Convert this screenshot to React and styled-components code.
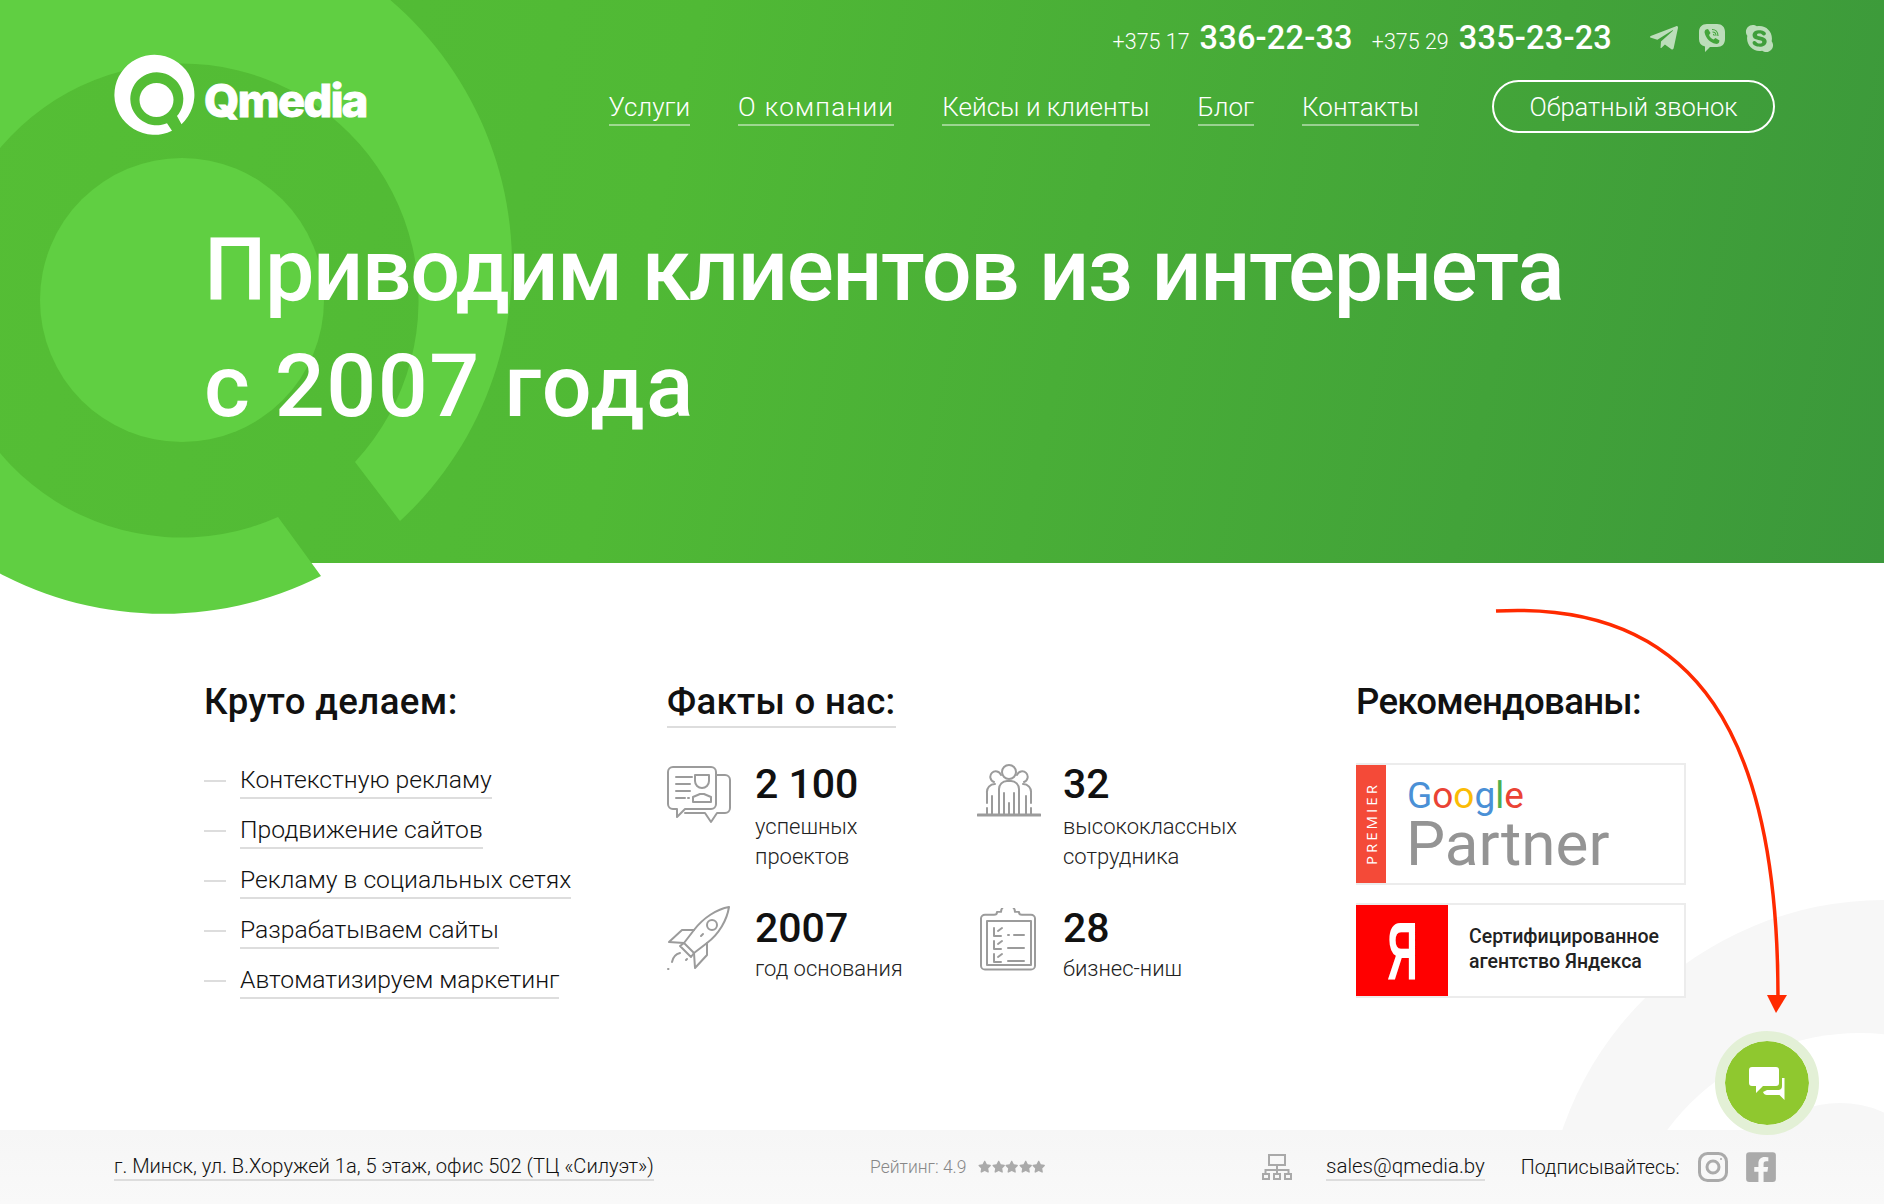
import React from "react";
import styled, { createGlobalStyle } from "styled-components";
import { FaTelegramPlane, FaSkype, FaFacebookSquare, FaStar } from "react-icons/fa";

const Global = createGlobalStyle`
  html, body {
    margin: 0;
    padding: 0;
    background: #fff;
  }
  body {
    font-family: Roboto, "Noto Sans", sans-serif;
    color: #111;
  }
  * {
    box-sizing: border-box;
  }
`;

const Page = styled.div`
  position: relative;
  width: 1884px;
  height: 1204px;
  overflow: hidden;
  background: #fff;
  display: flex;
  flex-direction: column;
`;

const Decor = styled.svg`
  position: absolute;
  left: 0;
  top: 0;
  z-index: 1;
`;

const Hero = styled.section`
  height: 563px;
  flex: none;
  background: linear-gradient(102deg, #55be35 0%, #50b935 35%, #3b983b 100%);
  color: #fff;
`;

const Header = styled.header`
  position: relative;
  z-index: 2;
  display: flex;
  justify-content: space-between;
  padding: 0 109px 0 114px;
`;

const Logo = styled.a`
  display: flex;
  align-items: center;
  gap: 9px;
  margin-top: 54px;
  height: 82px;
`;

const LogoText = styled.span`
  font-family: Inter, sans-serif;
  font-weight: 800;
  font-size: 45px;
  letter-spacing: -1.5px;
  color: #fff;
  margin-top: 10px;
  -webkit-text-stroke: 1px #fff;
`;

const HeaderRight = styled.div`
  display: flex;
  flex-direction: column;
  align-items: flex-end;
`;

const Contacts = styled.div`
  display: flex;
  align-items: center;
  height: 80px;
  padding-bottom: 4px;
`;

const Phone = styled.a`
  display: flex;
  align-items: baseline;
  gap: 10px;
  margin-right: 19px;
  font-size: 21.5px;
  font-weight: 300;
  color: #fff;
  white-space: nowrap;

  b {
    font-size: 32.5px;
    font-weight: 500;
    letter-spacing: 0.2px;
  }
`;

const Messengers = styled.div`
  display: flex;
  align-items: center;
  gap: 18px;
  margin-left: 17px;
  color: rgba(255, 255, 255, 0.65);

  svg {
    display: block;
  }
`;

const NavRow = styled.nav`
  display: flex;
  align-items: center;
  height: 53px;
`;

const NavLink = styled.a`
  font-size: 26px;
  font-weight: 300;
  line-height: 34px;
  color: #fff;
  border-bottom: 2px solid rgba(255, 255, 255, 0.45);
  margin-right: 48px;
  margin-top: 2px;
  white-space: nowrap;

  &:nth-child(2) {
    letter-spacing: 1.3px;
  }
`;

const CallButton = styled.a`
  display: flex;
  align-items: center;
  justify-content: center;
  width: 283px;
  height: 53px;
  margin-left: 25px;
  border: 2px solid #fff;
  border-radius: 27px;
  font-size: 25.5px;
  font-weight: 300;
  color: #fff;
`;

const Title = styled.h1`
  position: relative;
  z-index: 2;
  margin: 76px 0 0 204px;
  font-size: 88px;
  line-height: 116px;
  font-weight: 500;
  letter-spacing: -1.5px;
  color: #fff;
`;

const TitleLine = styled.span`
  letter-spacing: 1.5px;
`;

const Main = styled.main`
  position: relative;
  flex: 1;
  padding: 115px 0 0 204px;
  display: grid;
  grid-template-columns: 463px 689px 330px;
  align-items: start;
`;

const BackShape = styled.svg`
  position: absolute;
  left: 1500px;
  top: 300px;
`;

const Column = styled.div`
  position: relative;
`;

const Heading = styled.h2`
  display: inline-block;
  margin: 0;
  font-size: 36.6px;
  line-height: 48px;
  font-weight: 500;
  letter-spacing: ${(p) => p.$ls}px;
  color: #111;
  border-bottom: ${(p) => (p.$line ? "2px solid #ddd" : "2px solid transparent")};
`;

const List = styled.ul`
  list-style: none;
  margin: 35px 0 0;
  padding: 0;
  display: flex;
  flex-direction: column;
  gap: 14px;
`;

const ListItem = styled.li`
  display: flex;
  align-items: center;
  gap: 14px;
  height: 36px;

  &::before {
    content: "";
    width: 22px;
    height: 2px;
    background: #ddd;
  }
`;

const ListLink = styled.a`
  font-size: 24.7px;
  font-weight: 300;
  line-height: 34px;
  color: #111;
  border-bottom: 2px solid #ddd;
  white-space: nowrap;
`;

const Facts = styled.div`
  display: grid;
  grid-template-columns: 310px 300px;
  grid-template-rows: 144px auto;
  margin-top: 32px;
`;

const Fact = styled.div`
  display: flex;
  align-items: flex-start;
`;

const FactIcon = styled.svg`
  flex: none;
  width: 64px;
  height: 64px;
  margin-top: ${(p) => p.$top}px;
  margin-right: ${(p) => p.$gap}px;
  fill: none;
  stroke: #9b9b9b;
  stroke-width: 2;
  stroke-linecap: round;
  stroke-linejoin: round;
`;

const FactNumber = styled.div`
  font-size: 41px;
  line-height: 48px;
  font-weight: 500;
  color: #111;
`;

const FactLabel = styled.div`
  margin-top: ${(p) => (p.$tight ? 2 : 4)}px;
  font-size: 22px;
  line-height: 30px;
  font-weight: 300;
  color: #222;
`;

const Badge = styled.div`
  display: flex;
  width: 330px;
  height: ${(p) => p.$h}px;
  margin-top: ${(p) => p.$top}px;
  background: #fff;
  border: 2px solid #ececec;
  border-left: 0;
`;

const PremierStripe = styled.div`
  width: 30px;
  background: #f44a38;
  color: #fff;
  font-family: "Open Sans", sans-serif;
  font-size: 15px;
  letter-spacing: 3px;
  display: flex;
  align-items: center;
  justify-content: center;
  writing-mode: vertical-rl;
  transform: rotate(180deg);
`;

const GoogleBlock = styled.div`
  padding: 8px 0 0 21px;
  display: flex;
  flex-direction: column;
`;

const GoogleWord = styled.div`
  font-size: 37px;
  line-height: 46px;
`;

const GoogleLetter = styled.span`
  color: ${(p) => p.$c};
`;

const PartnerWord = styled.div`
  margin: -3px 0 0 -1px;
  font-size: 62px;
  line-height: 56px;
  color: #949494;
`;

const YandexBox = styled.div`
  width: 92px;
  background: #f00;
  color: #fff;
  font-family: "Liberation Sans", sans-serif;
  font-size: 82px;
  font-weight: 700;
  display: flex;
  align-items: center;
  justify-content: center;

  span {
    display: block;
    transform: scaleX(0.52);
  }
`;

const YandexText = styled.div`
  padding-left: 21px;
  margin-top: -3px;
  align-self: center;
  font-size: 19.5px;
  line-height: 25px;
  font-weight: 500;
  color: #222;
`;

const Footer = styled.footer`
  position: relative;
  z-index: 2;
  flex: none;
  height: 74px;
  background: linear-gradient(180deg, #f6f6f6, #f9f9f9);
  padding: 0 108px 0 114px;
  display: grid;
  grid-template-columns: 756px 392px auto;
  align-items: center;
`;

const Address = styled.a`
  justify-self: start;
  font-size: 20.1px;
  line-height: 26px;
  font-weight: 300;
  color: #111;
  border-bottom: 2px solid #ddd;
  white-space: nowrap;
`;

const Rating = styled.div`
  display: flex;
  align-items: center;
  gap: 12px;
  font-size: 17.5px;
  font-weight: 300;
  color: #888;
`;

const Stars = styled.div`
  display: flex;
  color: #aaa;
  font-size: 13.4px;
`;

const FooterRight = styled.div`
  display: flex;
  align-items: center;
`;

const Mail = styled.a`
  margin-left: 34px;
  font-size: 20.5px;
  line-height: 26px;
  font-weight: 300;
  color: #111;
  border-bottom: 2px solid #ddd;
`;

const Subscribe = styled.span`
  margin-left: 36px;
  margin-right: 18px;
  font-size: 19.7px;
  font-weight: 300;
  color: #111;
`;

const SocialLink = styled.a`
  display: flex;
  margin-right: ${(p) => p.$gap || 0}px;
  color: #aaa;
`;

const ChatButton = styled.button`
  position: absolute;
  left: 1715px;
  top: 1031px;
  z-index: 3;
  width: 104px;
  height: 104px;
  padding: 0;
  border: 10px solid #e3f0d6;
  border-radius: 50%;
  background: #8fc82f;
  background-clip: padding-box;
  display: flex;
  align-items: center;
  justify-content: center;
`;

const Arrow = styled.svg`
  position: absolute;
  left: 1490px;
  top: 605px;
  z-index: 3;
  overflow: visible;
`;

const nav = ["Услуги", "О компании", "Кейсы и клиенты", "Блог", "Контакты"];
const services = [
  "Контекстную рекламу",
  "Продвижение сайтов",
  "Рекламу в социальных сетях",
  "Разрабатываем сайты",
  "Автоматизируем маркетинг",
];
const googleLetters = [
  ["G", "#4a90d6"],
  ["o", "#ea4335"],
  ["o", "#fbbc05"],
  ["g", "#4a90d6"],
  ["l", "#4caf50"],
  ["e", "#ea4335"],
];

function QLogo() {
  return (
    <svg width="81" height="82" viewBox="114 54 81 82">
      <path
        fill="#fff"
        d="M181.500 124.200A40 40 0 1 0 172 130.700L167 123.300A26.500 26.500 0 1 1 177 116Z"
      />
      <circle cx="156.500" cy="100" r="17" fill="#fff" />
    </svg>
  );
}

function ViberIcon() {
  return (
    <svg width="28" height="30" viewBox="0 0 28 30">
      <path
        fill="currentColor"
        d="M9 1h10c5 0 8 3 8 8v7c0 5-3 8-8 8h-7l-5 5v-5.500C3 22.500 1 20 1 16V9c0-5 3-8 8-8Z"
      />
      <path
        fill="#43a53a"
        d="M8 6.500 10 6l2.500 4-1.500 2c.8 2 2.400 3.600 4.500 4.500l2-1.500 4 2.500-.5 2c-.5 1.200-2 1.700-3.500 1.300C12 19.500 8 15.500 6.700 10 6.300 8.500 6.900 7 8 6.500Z"
      />
      <path
        fill="none"
        stroke="#43a53a"
        strokeWidth="1.100"
        d="M14 6.500c3.500 0 6 2.500 6 6.500M14.500 9c2 0 3.500 1.500 3.500 3.800M15 11.200c1 0 1.200.6 1.200 1.600"
      />
    </svg>
  );
}

function TalkIcon() {
  return (
    <FactIcon viewBox="0 0 64 64" $gap={24} $top={6}>
      <path d="M6 1h38a5 5 0 0 1 5 5v32a5 5 0 0 1-5 5H18l-8 8v-8H6a5 5 0 0 1-5-5V6a5 5 0 0 1 5-5Z" />
      <path d="M49 9h9a5 5 0 0 1 5 5v28a5 5 0 0 1-5 5h-8l-6 9-6-9H18" />
      <path d="M9 11h16M9 18h14M9 25h14M9 32h9M21 32h1" />
      <path d="M28 9h14v6a7 7 0 0 1-14 0ZM26 36v-5l7-3h4l7 3v5Z" />
    </FactIcon>
  );
}

function TeamIcon() {
  return (
    <FactIcon viewBox="0 0 64 64" $gap={22} $top={3}>
      <circle cx="32" cy="9" r="7" />
      <path d="M24 12a5.500 5.500 0 1 0-7 7M40 12a5.500 5.500 0 1 1 7 7" />
      <path d="M22 51V26a8 8 0 0 1 8-8h4a8 8 0 0 1 8 8v25M27 30v21M37 30v21M32 40v11" />
      <path d="M10 40V30a8 8 0 0 1 8-9M54 40V30a8 8 0 0 0-8-9M15 33v18M49 33v18M10 45v6M54 45v6" />
      <path d="M1 52h62" strokeWidth="3" />
    </FactIcon>
  );
}

function RocketIcon() {
  return (
    <FactIcon viewBox="0 0 64 64" $gap={24} $top={2}>
      <path d="M62 1C50 3 36 12 27 24L17 37l10 10 13-10C52 28 60 14 62 1Z" />
      <circle cx="45" cy="19" r="5" />
      <path d="M27 24H15L2 36l15 1M40 37v12L28 62l-1-15" />
      <path d="M17 37l-4 3 11 11 3-4M13 47c-4 1-7 4-8 9M1 63h.5M20 53l-1 1" />
      <path d="M34 30l2-2" />
    </FactIcon>
  );
}

function ChecklistIcon() {
  return (
    <FactIcon viewBox="0 0 64 64" $gap={22} $top={4}>
      <path d="M9 6h9a3 3 0 0 0 3-3h4a7 7 0 0 1 14 0h4a3 3 0 0 0 3 3h9a4 4 0 0 1 4 4v49a4 4 0 0 1-4 4H9a4 4 0 0 1-4-4V10a4 4 0 0 1 4-4Z" transform="translate(-1 1) scale(1 .96)" />
      <path d="M10 13h44v44H10Z" />
      <path d="M17 20v8h7M21 23l4-3M17 33v8h7M21 36l4-3M17 46v8h7M21 49l4-3" />
      <path d="M31 27h1M37 27h10M31 40h16M31 53h16" />
    </FactIcon>
  );
}

function NetworkIcon() {
  return (
    <svg width="30" height="26" viewBox="0 0 30 26" fill="none" stroke="#a9a9a9" strokeWidth="2">
      <rect x="7" y="1" width="16" height="10" />
      <path d="M15 11v5M3.500 20v-4h23v4M15 16v4" />
      <rect x="1" y="20" width="6" height="5" />
      <rect x="12" y="20" width="6" height="5" />
      <rect x="23" y="20" width="6" height="5" />
    </svg>
  );
}

function InstagramIcon() {
  return (
    <svg width="30" height="30" viewBox="0 0 30 30" fill="none" stroke="#aaa" strokeWidth="3">
      <rect x="1.500" y="1.500" width="27" height="27" rx="8" />
      <circle cx="15" cy="15" r="6" />
      <circle cx="23" cy="7" r="1" fill="#aaa" strokeWidth="0" />
    </svg>
  );
}

function ChatIcon() {
  return (
    <svg width="40" height="38" viewBox="0 0 40 38" fill="#fff">
      <path d="M5 3h24a3 3 0 0 1 3 3v13a3 3 0 0 1-3 3H16l-7 7v-7H5a3 3 0 0 1-3-3V6a3 3 0 0 1 3-3Z" />
      <path d="M35 14h2.500v22l-5-5H20q-3 0-4-3l4-2h11q4 0 4-4Z" />
    </svg>
  );
}

export default function App() {
  return (
    <Page>
      <Global />
      <Decor width="520" height="620" viewBox="0 0 520 620">
        <path
          fill="#60cf42"
          d="M400 521A349 349 0 1 0 321 576L278 517A237 237 0 1 1 355 462Z"
        />
        <circle cx="182" cy="300" r="142" fill="#60cf42" />
      </Decor>
      <Hero>
        <Header>
          <Logo>
            <QLogo />
            <LogoText>Qmedia</LogoText>
          </Logo>
          <HeaderRight>
            <Contacts>
              <Phone>
                +375 17 <b>336-22-33</b>
              </Phone>
              <Phone>
                +375 29 <b>335-23-23</b>
              </Phone>
              <Messengers>
                <FaTelegramPlane size={32} />
                <ViberIcon />
                <FaSkype size={31} />
              </Messengers>
            </Contacts>
            <NavRow>
              {nav.map((n) => (
                <NavLink key={n}>{n}</NavLink>
              ))}
              <CallButton>Обратный звонок</CallButton>
            </NavRow>
          </HeaderRight>
        </Header>
        <Title>
          Приводим клиентов из интернета
          <br />
          <TitleLine>с 2007 года</TitleLine>
        </Title>
      </Hero>
      <Main>
        <BackShape width="384" height="330" viewBox="1500 863 384 330">
          <circle cx="1884" cy="1240" r="340" fill="#f7f7f7" />
          <circle cx="1860" cy="1273" r="240" fill="#fff" />
          <circle cx="1840" cy="1210" r="107" fill="#f7f7f7" />
        </BackShape>
        <Column>
          <Heading $ls={0.4}>Круто делаем:</Heading>
          <List>
            {services.map((s) => (
              <ListItem key={s}>
                <ListLink>{s}</ListLink>
              </ListItem>
            ))}
          </List>
        </Column>
        <Column>
          <Heading $line $ls={0.3}>Факты о нас:</Heading>
          <Facts>
            <Fact>
              <TalkIcon />
              <div>
                <FactNumber>2 100</FactNumber>
                <FactLabel>
                  успешных
                  <br />
                  проектов
                </FactLabel>
              </div>
            </Fact>
            <Fact>
              <TeamIcon />
              <div>
                <FactNumber>32</FactNumber>
                <FactLabel>
                  высококлассных
                  <br />
                  сотрудника
                </FactLabel>
              </div>
            </Fact>
            <Fact>
              <RocketIcon />
              <div>
                <FactNumber>2007</FactNumber>
                <FactLabel $tight>год основания</FactLabel>
              </div>
            </Fact>
            <Fact>
              <ChecklistIcon />
              <div>
                <FactNumber>28</FactNumber>
                <FactLabel $tight>бизнес-ниш</FactLabel>
              </div>
            </Fact>
          </Facts>
        </Column>
        <Column>
          <Heading $ls={-0.7}>Рекомендованы:</Heading>
          <Badge $h={122} $top={35}>
            <PremierStripe>PREMIER</PremierStripe>
            <GoogleBlock>
              <GoogleWord>
                {googleLetters.map(([l, c], i) => (
                  <GoogleLetter key={i} $c={c}>
                    {l}
                  </GoogleLetter>
                ))}
              </GoogleWord>
              <PartnerWord>Partner</PartnerWord>
            </GoogleBlock>
          </Badge>
          <Badge $h={95} $top={18}>
            <YandexBox>
              <span>Я</span>
            </YandexBox>
            <YandexText>
              Сертифицированное
              <br />
              агентство Яндекса
            </YandexText>
          </Badge>
        </Column>
      </Main>
      <Footer>
        <Address>г. Минск, ул. В.Хоружей 1а, 5 этаж, офис 502 (ТЦ «Силуэт»)</Address>
        <Rating>
          Рейтинг: 4.9
          <Stars>
            {[0, 1, 2, 3, 4].map((i) => (
              <FaStar key={i} />
            ))}
          </Stars>
        </Rating>
        <FooterRight>
          <NetworkIcon />
          <Mail>sales@qmedia.by</Mail>
          <Subscribe>Подписывайтесь:</Subscribe>
          <SocialLink $gap={16}>
            <InstagramIcon />
          </SocialLink>
          <SocialLink>
            <FaFacebookSquare size={34} />
          </SocialLink>
        </FooterRight>
      </Footer>
      <ChatButton aria-label="chat">
        <ChatIcon />
      </ChatButton>
      <Arrow width="300" height="415" viewBox="0 0 300 415" fill="none">
        <path d="M6 6C210 -5 288 135 288 392" stroke="#ff2a00" strokeWidth="3.500" />
        <path d="M277 390H297L286 408Z" fill="#ff2a00" />
      </Arrow>
    </Page>
  );
}
